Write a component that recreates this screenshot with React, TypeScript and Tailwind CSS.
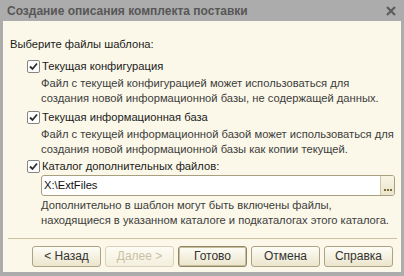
import React from "react";

function Check() {
  return (
    <span className="flex h-[13px] w-[13px] shrink-0 items-center justify-center rounded-[2px] border border-[#858585] bg-white">
      <svg width="9" height="9" viewBox="0 0 9 9">
        <path d="M1 4.5 L3.5 7 L8 1.5" fill="none" stroke="#2e2e2e" strokeWidth="1.8" />
      </svg>
    </span>
  );
}

function Btn({ label, disabled, def }: { label: string; disabled?: boolean; def?: boolean }) {
  return (
    <div
      className={
        "flex h-[21px] w-[69px] items-center justify-center rounded-[3px] border bg-gradient-to-b text-[12px] " +
        (disabled
          ? "border-[#d9d2b8] text-[#c9c0a2] from-[#fdfcf5] to-[#f3efdd]"
          : def
          ? "border-[#8f8466] text-[#333] from-[#fefdf7] to-[#ebe5cc] shadow-[inset_0_0_0_1px_#c9bf9c]"
          : "border-[#ada284] text-[#333] from-[#fefdf7] to-[#ebe5cc]")
      }
    >
      {label}
    </div>
  );
}

export default function App() {
  return (
    <div
      className="flex h-[276px] w-[404px] flex-col overflow-hidden bg-[#acacac]"
      style={{ fontFamily: '"Liberation Sans", Arial, sans-serif' }}
    >
      <div className="flex h-[21px] shrink-0 items-center justify-between pl-[7px] pr-[8px]">
        <span className="whitespace-nowrap text-[12px] font-bold text-[#575757]">Создание описания комплекта поставки</span>
        <svg width="10" height="10" viewBox="0 0 10 10">
          <path d="M1 1 L9 9 M9 1 L1 9" stroke="#5e5e5e" strokeWidth="2.3" />
        </svg>
      </div>
      <div className="mx-[3px] mb-[4px] flex flex-1 flex-col whitespace-nowrap bg-[#fbf8e9] text-[11.2px] leading-[15px]">
        <div className="pl-[7px] pt-[16px] text-[#1a1a1a]">Выберите файлы шаблона:</div>
        <div className="mt-[7px] flex items-center gap-[2px] pl-[24px] text-[#1a1a1a]">
          <Check />
          <span>Текущая конфигурация</span>
        </div>
        <div className="mt-[2px] pl-[38px] text-[#3c3c3c]">
          Файл с текущей конфигурацией может использоваться для
          <br />
          создания новой информационной базы, не содержащей данных.
        </div>
        <div className="mt-[4px] flex items-center gap-[2px] pl-[24px] text-[#1a1a1a]">
          <Check />
          <span>Текущая информационная база</span>
        </div>
        <div className="mt-[2px] pl-[38px] text-[#3c3c3c]">
          Файл с текущей информационной базой может использоваться для
          <br />
          создания новой информационной базы как копии текущей.
        </div>
        <div className="mt-[2px] flex items-center gap-[2px] pl-[24px] text-[#1a1a1a]">
          <Check />
          <span>Каталог дополнительных файлов:</span>
        </div>
        <div className="ml-[38px] mr-[6px] mt-[1px] flex h-[21px] shrink-0 overflow-hidden rounded-[3px] border border-[#a89f80] bg-white">
          <div className="flex flex-1 items-center pl-[2px] text-[#111]">X:\ExtFiles</div>
          <div className="flex w-[14px] items-end justify-center border-l border-[#cfc7a8] bg-gradient-to-b from-[#f8f5e6] to-[#ebe5cc] pb-[4px]">
            <span className="flex gap-[1px]">
              <span className="h-[2px] w-[2px] bg-[#7a6a3a]" />
              <span className="h-[2px] w-[2px] bg-[#7a6a3a]" />
              <span className="h-[2px] w-[2px] bg-[#7a6a3a]" />
            </span>
          </div>
        </div>
        <div className="mt-[2px] pl-[38px] text-[#3c3c3c]">
          Дополнительно в шаблон могут быть включены файлы,
          <br />
          находящиеся в указанном каталоге и подкаталогах этого каталога.
        </div>
        <div className="ml-[5px] mr-[4px] mt-[10px] h-[1px] shrink-0 bg-[#cbc2a2]" />
        <div className="mt-[7px] flex gap-[4px] pl-[29px]">
          <Btn label="< Назад" />
          <Btn label="Далее >" disabled />
          <Btn label="Готово" def />
          <Btn label="Отмена" />
          <Btn label="Справка" />
        </div>
      </div>
    </div>
  );
}
